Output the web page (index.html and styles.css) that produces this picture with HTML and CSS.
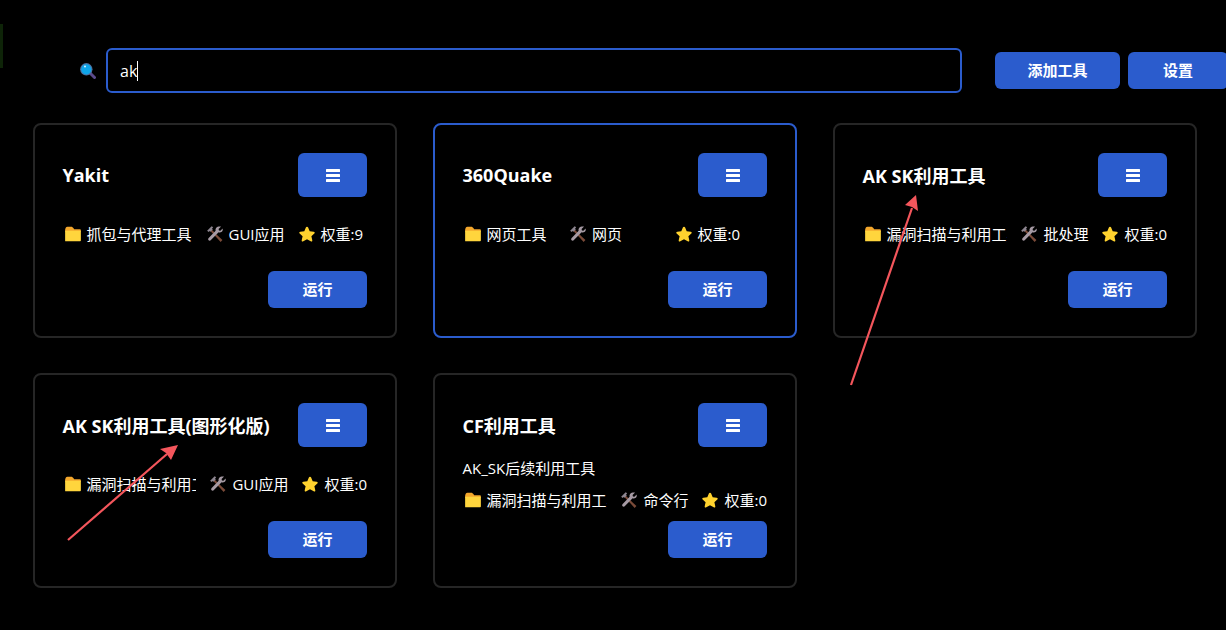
FILE: index.html
```html
<!DOCTYPE html>
<html lang="en">
<head>
  <meta charset="UTF-8">
  <title>Tool Launcher</title>
  <meta name="viewport" content="width=device-width, initial-scale=1">
  <link rel="stylesheet" href="styles.css">
</head>
<body>
  <svg class="sprites" width="0" height="0">
    <symbol id="icon-folder" viewBox="0 0 16 16">
      <path d="M1 4.500C1 3 1.800 1.500 3 1.500h3.400c.8 0 1.200.4 1.700 1l1 1.200H14c.6 0 1 .4 1 1V6H1z" fill="#f3a72c"/>
      <path d="M1 5.200h13.600c.3 0 .4.200.4.400v8.200c0 .5-.3.700-.7.700H1.500c-.3 0-.5-.2-.5-.5z" fill="#ffd53d"/>
    </symbol>
    <symbol id="icon-tools" viewBox="0 0 16 16">
      <path d="M3.600 2.600l1.600 1.600L11 10l3.600 3.400-1.600 1.600L9.600 11.400 4 5.600z" fill="#7a4a38"/>
      <path d="M13.400 1.400l-2.200 2.100.3 1.300 1.300.3 2-2c.3 1.400-.1 2.600-1.200 3.200-.8.4-1.600.4-2.400.1L4.600 13c-.6.7-1.500 1.300-2.300.6-.8-.7-.3-1.600.3-2.200l6-6.200c-.3-.9-.2-1.800.4-2.600.9-1.100 2.600-1.500 4.400-1.200z" fill="#a69aa4"/>
      <path d="M1 5l4-4 1.400 1-1 1.200L6 4 4 6 3.300 5.300 2.400 6.200z" fill="#8d8590"/>
    </symbol>
    <symbol id="icon-star" viewBox="0 0 16 16">
      <path d="M8 1.500c.5 0 .8.3 1 .8l1.400 3.200 3.500.4c1 .1 1.300 1 .6 1.600L11.900 10l.8 3.500c.2 1-.6 1.500-1.400 1L8 12.700l-3.300 1.800c-.8.5-1.600 0-1.400-1L4.100 10 1.500 7.500c-.7-.6-.4-1.500.6-1.600l3.500-.4L7 2.300c.2-.5.500-.8 1-.8z" fill="#ffd22e"/>
    </symbol>
    <symbol id="icon-bars" viewBox="0 0 14 13">
      <rect width="14" height="3" rx=".5" y="0" fill="#fff"/>
      <rect width="14" height="3" rx=".5" y="5" fill="#fff"/>
      <rect width="14" height="3" rx=".5" y="10" fill="#fff"/>
    </symbol>
  </svg>

  <div class="edge-strip"></div>

  <header class="toolbar">
    <svg class="search-icon" width="16" height="16" viewBox="0 0 16 16">
      <path d="M10 10l4.500 4.500" stroke="#5b4a8c" stroke-width="3" stroke-linecap="round"/>
      <circle cx="6.300" cy="6.300" r="6.200" fill="#4e6f9e"/>
      <circle cx="6.300" cy="6.300" r="5.100" fill="#0ea5e9"/>
      <circle cx="5" cy="3.600" r="1" fill="#d9f3ff"/>
    </svg>
    <div class="search-box"><span>ak</span><span class="caret"></span></div>
    <button class="btn btn-add">添加工具</button>
    <button class="btn btn-settings">设置</button>
  </header>

  <main class="tool-grid">
    <article class="card">
      <div class="card-head">
        <h2>Yakit</h2>
        <button class="btn btn-menu"><svg width="14" height="13"><use href="#icon-bars"/></svg></button>
      </div>
      <div class="card-body">
        <div class="meta meta-short">
          <span class="meta-item"><svg width="18" height="18"><use href="#icon-folder"/></svg><span>抓包与代理工具</span></span>
          <span class="meta-item"><svg width="18" height="18"><use href="#icon-tools"/></svg><span>GUI应用</span></span>
          <span class="meta-item"><svg width="18" height="18"><use href="#icon-star"/></svg><span>权重:9</span></span>
        </div>
      </div>
      <div class="card-foot"><button class="btn btn-run">运行</button></div>
    </article>

    <article class="card card-active">
      <div class="card-head">
        <h2>360Quake</h2>
        <button class="btn btn-menu"><svg width="14" height="13"><use href="#icon-bars"/></svg></button>
      </div>
      <div class="card-body">
        <div class="meta meta-even">
          <span class="meta-item"><svg width="18" height="18"><use href="#icon-folder"/></svg><span>网页工具</span></span>
          <span class="meta-item"><svg width="18" height="18"><use href="#icon-tools"/></svg><span>网页</span></span>
          <span class="meta-item"><svg width="18" height="18"><use href="#icon-star"/></svg><span>权重:0</span></span>
        </div>
      </div>
      <div class="card-foot"><button class="btn btn-run">运行</button></div>
    </article>

    <article class="card">
      <div class="card-head">
        <h2>AK SK利用工具</h2>
        <button class="btn btn-menu"><svg width="14" height="13"><use href="#icon-bars"/></svg></button>
      </div>
      <div class="card-body">
        <div class="meta">
          <span class="meta-item"><svg width="18" height="18"><use href="#icon-folder"/></svg><span>漏洞扫描与利用工具</span></span>
          <span class="meta-item"><svg width="18" height="18"><use href="#icon-tools"/></svg><span>批处理</span></span>
          <span class="meta-item"><svg width="18" height="18"><use href="#icon-star"/></svg><span>权重:0</span></span>
        </div>
      </div>
      <div class="card-foot"><button class="btn btn-run">运行</button></div>
    </article>

    <article class="card">
      <div class="card-head">
        <h2>AK SK利用工具(图形化版)</h2>
        <button class="btn btn-menu"><svg width="14" height="13"><use href="#icon-bars"/></svg></button>
      </div>
      <div class="card-body">
        <div class="meta">
          <span class="meta-item"><svg width="18" height="18"><use href="#icon-folder"/></svg><span>漏洞扫描与利用工具</span></span>
          <span class="meta-item"><svg width="18" height="18"><use href="#icon-tools"/></svg><span>GUI应用</span></span>
          <span class="meta-item"><svg width="18" height="18"><use href="#icon-star"/></svg><span>权重:0</span></span>
        </div>
      </div>
      <div class="card-foot"><button class="btn btn-run">运行</button></div>
    </article>

    <article class="card">
      <div class="card-head">
        <h2>CF利用工具</h2>
        <button class="btn btn-menu"><svg width="14" height="13"><use href="#icon-bars"/></svg></button>
      </div>
      <div class="card-body">
        <p class="desc">AK_SK后续利用工具</p>
        <div class="meta">
          <span class="meta-item"><svg width="18" height="18"><use href="#icon-folder"/></svg><span>漏洞扫描与利用工具</span></span>
          <span class="meta-item"><svg width="18" height="18"><use href="#icon-tools"/></svg><span>命令行</span></span>
          <span class="meta-item"><svg width="18" height="18"><use href="#icon-star"/></svg><span>权重:0</span></span>
        </div>
      </div>
      <div class="card-foot"><button class="btn btn-run">运行</button></div>
    </article>
  </main>

  <!-- annotation arrows drawn over the screenshot -->
  <svg class="arrows" width="1226" height="630" viewBox="0 0 1226 630">
    <path d="M851 385L912 208" stroke="#f4565c" stroke-width="2.200" fill="none"/>
    <path d="M916 195L918 211 912 207 905 205z" fill="#f4565c"/>
    <path d="M68 540L167 454" stroke="#f4565c" stroke-width="2.200" fill="none"/>
    <path d="M178 445L171 460 166 453 160 449z" fill="#f4565c"/>
  </svg>
</body>
</html>
```

FILE: styles.css
```css
* {
  box-sizing: border-box;
}

html,
body {
  height: 100%;
}

body {
  margin: 0;
  background: #000;
  color: #fff;
  font-family: "Open Sans", "Noto Sans CJK SC", sans-serif;
  font-size: 15px;
  overflow: hidden;
}

.sprites {
  position: absolute;
}

.edge-strip {
  position: absolute;
  left: 0;
  top: 24px;
  width: 3px;
  height: 44px;
  background: #0e2408;
}

.toolbar {
  display: flex;
  align-items: center;
  width: 1228px;
  padding: 48px 0 0 80px;
}

.search-icon {
  flex: none;
  margin: 1px 10px 0 0;
}

.search-box {
  flex: 1;
  display: flex;
  align-items: center;
  height: 45px;
  padding-left: 12px;
  border: 2px solid #2b5ccd;
  border-radius: 6px;
  font-size: 16px;
}

.caret {
  width: 1px;
  height: 20px;
  background: #fff;
}

.btn {
  border: none;
  border-radius: 6px;
  background: #2b5ccd;
  color: #fff;
  font-family: inherit;
  font-size: 15px;
  line-height: 18px;
  font-weight: 700;
  padding: 0 0 2px;
  cursor: pointer;
}

.btn-add,
.btn-settings {
  height: 37px;
}

.btn-add {
  width: 125px;
  margin-left: 33px;
}

.btn-settings {
  width: 100px;
  margin-left: 8px;
}

.tool-grid {
  display: grid;
  grid-template-columns: repeat(3, 364.5px);
  column-gap: 35.5px;
  row-gap: 35px;
  padding: 30px 0 0 32.5px;
}

.card {
  display: flex;
  flex-direction: column;
  height: 215px;
  padding: 28px;
  border: 2px solid #262626;
  border-radius: 8px;
}

.card-active {
  border-color: #2b5ccd;
}

.card-head {
  display: flex;
  align-items: center;
  justify-content: space-between;
}

.card-head h2 {
  margin: 0;
  font-size: 18px;
  font-weight: 700;
}

.btn-menu {
  display: flex;
  align-items: center;
  justify-content: center;
  width: 69px;
  height: 44px;
  padding: 0;
}

.card-body {
  flex: 1;
  display: flex;
  flex-direction: column;
  justify-content: center;
  gap: 12px;
}

.desc {
  margin: 0;
  line-height: 20px;
}

.meta {
  display: flex;
  gap: 12px;
  line-height: 20px;
}

.meta-item {
  flex: none;
  display: flex;
  align-items: center;
  gap: 5px;
  white-space: nowrap;
  padding-left: 1px;
}

.meta-item svg {
  flex: none;
}

.meta-item:first-child {
  flex: 1 1 0;
  min-width: 0;
  overflow: hidden;
}

/* short labels leave room, so the columns even out */
.meta-even .meta-item {
  flex: 1 1 0;
}

.meta-short .meta-item:first-child {
  flex: none;
  width: 130px;
}

.meta-short .meta-item:last-child {
  flex: 1;
}

.card-foot {
  display: flex;
  justify-content: flex-end;
}

.btn-run {
  width: 99px;
  height: 37px;
}

.arrows {
  position: absolute;
  left: 0;
  top: 0;
  pointer-events: none;
}
```
